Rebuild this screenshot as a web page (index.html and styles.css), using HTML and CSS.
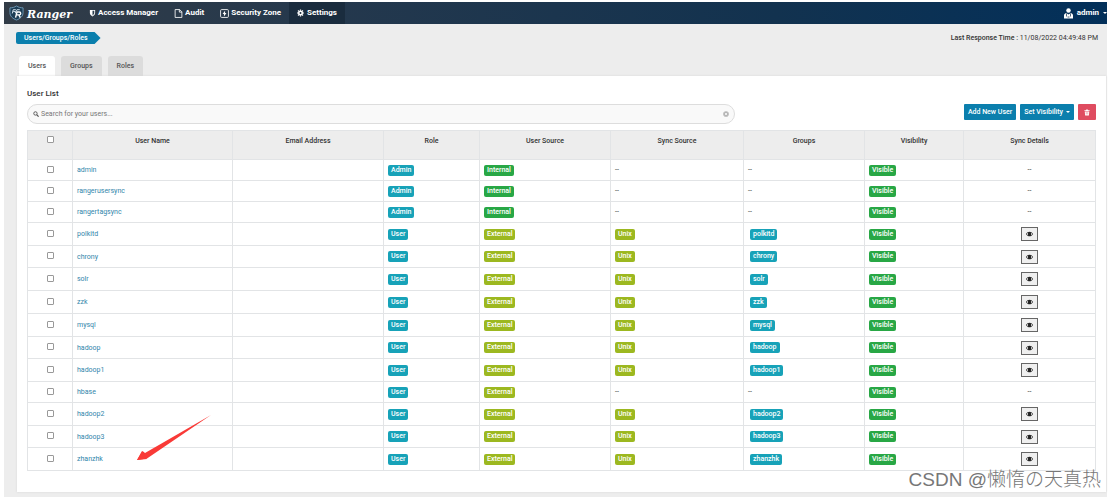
FILE: index.html
```html
<!DOCTYPE html>
<html lang="en">
<head>
<meta charset="utf-8">
<title>Ranger - Users</title>
<link rel="stylesheet" href="styles.css">
</head>
<body>
<div class="app">
  <header class="topbar">
    <a class="brand" href="#">
      <svg class="brand-mark" viewBox="0 0 32 32" aria-hidden="true">
        <path d="M16 1C12 4 7 5 2 5v10c0 8 6 13 14 16 8-3 14-8 14-16V5C25 5 20 4 16 1z" fill="#1c3d55" stroke="#6f9ab8" stroke-width="2"/>
        <path d="M7 17l2-8h5c3 0 3 4 0 4H9m4 0 2 4" fill="none" stroke="#dce9f2" stroke-width="2"/>
        <path d="M14 26l3-12h5c4 0 4 6 0 6h-6m5 0 3 6" fill="none" stroke="#fff" stroke-width="3"/>
        <path d="M17 9h6" stroke="#dce9f2" stroke-width="2"/>
      </svg>
      <span>Ranger</span>
    </a>
    <nav class="menu">
      <a href="#"><svg class="icon" viewBox="0 0 16 16"><path d="M2 1h12v7c0 4-3 6-6 8-3-2-6-4-6-8z" fill="#fff"/><path d="M8 3h4v5c0 2.500-2 4-4 5.500z" fill="#2b3e4f"/></svg>Access Manager</a>
      <a href="#"><svg class="icon icon-file" viewBox="0 0 16 16"><path d="M2 1h8l4 4v10H2zM9.500 1v4.500H14" fill="none" stroke="#fff" stroke-width="1.500"/></svg>Audit</a>
      <a href="#"><svg class="icon icon-lg" viewBox="0 0 16 16"><rect x="1" y="1" width="14" height="14" rx="2" fill="none" stroke="#fff" stroke-width="1.500"/><path d="M9 3 4.500 9H7v4.500L11.500 7H9z" fill="#fff"/></svg>Security Zone</a>
      <a class="current" href="#"><svg class="icon" viewBox="0 0 16 16"><circle cx="8" cy="8" r="4" fill="none" stroke="#fff" stroke-width="3.500"/><path d="M8 0v3M8 13v3M0 8h3M13 8h3M2.300 2.300l2 2M11.700 11.700l2 2M2.300 13.700l2-2M11.700 4.300l2-2" stroke="#fff" stroke-width="2.800"/></svg>Settings</a>
    </nav>
    <button class="account" type="button">
      <svg class="icon account-icon" viewBox="0 0 18 22"><circle cx="9" cy="5" r="4.500" fill="#fff"/><path d="M0 21v-6c0-3 2-4 4-5l5 3 5-3c2 1 4 2 4 5v6z" fill="#fff"/><path d="M5 11v6M13 11v6M7 18h4" stroke="#17334f" stroke-width="1.500"/></svg>
      admin<span class="caret"></span>
    </button>
  </header>

  <div class="crumbbar">
    <a class="crumb" href="#">Users/Groups/Roles</a>
    <p class="response"><b>Last Response Time :</b> 11/08/2022 04:49:48 PM</p>
  </div>

  <nav class="tabs">
    <a class="tab active" href="#">Users</a>
    <a class="tab" href="#">Groups</a>
    <a class="tab" href="#">Roles</a>
  </nav>

  <main class="panel">
    <h1>User List</h1>
    <div class="toolbar">
      <label class="search">
        <svg class="search-icon" viewBox="0 0 16 16"><circle cx="6.500" cy="6.500" r="4.500" fill="none" stroke="#555" stroke-width="2.500"/><path d="M10 10l5 5" stroke="#555" stroke-width="3"/></svg>
        <input type="text" placeholder="Search for your users..." aria-label="Search for your users">
        <svg class="help-icon" viewBox="0 0 16 16"><circle cx="8" cy="8" r="7.500" fill="#b5b5b5"/><path d="M5 5l6 6M11 5l-6 6" stroke="#fff" stroke-width="2"/></svg>
      </label>
      <div class="actions">
        <button class="btn" type="button">Add New User</button>
        <button class="btn" type="button">Set Visibility<span class="caret"></span></button>
        <button class="btn danger" type="button" aria-label="Delete"><svg viewBox="0 0 16 16"><path d="M1 2h4l1-2h4l1 2h4v2H1zM2 5h12l-1 11H3z" fill="#fff"/><path d="M6 7v6M10 7v6" stroke="#df4c60" stroke-width="1.200"/></svg></button>
      </div>
    </div>

    <table class="users">
      <colgroup>
        <col class="c-check"><col class="c-name"><col class="c-email"><col class="c-role"><col class="c-source"><col class="c-sync"><col class="c-groups"><col class="c-vis"><col class="c-details">
      </colgroup>
      <thead>
        <tr><th><input type="checkbox" aria-label="Select all"></th><th>User Name</th><th>Email Address</th><th>Role</th><th>User Source</th><th>Sync Source</th><th>Groups</th><th>Visibility</th><th>Sync Details</th></tr>
      </thead>
      <tbody id="rows"></tbody>
    </table>
    <svg class="pointer" viewBox="0 0 74 46" aria-hidden="true"><path d="M74 0 10 43.500 0 45 5.500 36 8 38z" fill="#f93a37"/><path d="M0 45 5 36l5 8z" fill="#f93a37"/></svg>
  </main>
  <div class="watermark">CSDN @懒惰の天真热</div>
</div>
<script src="app.js"></script>
</body>
</html>
```

FILE: styles.css
```css
* { box-sizing: border-box; }

body {
  margin: 0;
  background: #fff;
  color: #333;
  font-family: Roboto, "Noto Sans CJK SC", sans-serif;
  font-size: 7px;
  line-height: 10px;
}

a { color: inherit; text-decoration: none; }
button, input { font: inherit; margin: 0; }

.app {
  position: relative;
  margin: 2px 9px 2px 4px;
  padding-bottom: 5px;
  background: #ededed;
}

.topbar {
  display: flex;
  height: 22px;
  background: linear-gradient(90deg, #323c47, #24384d 30%, #12324f 70%, #03305a);
  color: #fff;
  font-size: 8px;
  font-weight: 700;
}

.brand {
  display: flex;
  align-items: center;
  gap: 3px;
  width: 77px;
  padding: 3px 0 0 5px;
  font-family: "DejaVu Serif", serif;
  font-size: 11px;
  font-style: italic;
}

.brand-mark { width: 15px; height: 16px; margin-bottom: 3px; }

.menu { display: flex; flex: 1; }

.menu a {
  display: flex;
  align-items: center;
  gap: 2px;
  padding: 0 8px;
}

.menu a.current { gap: 3px; background: #1a2c3e; }

.icon { width: 7px; height: 8px; flex: none; }
.icon-file, .icon-lg { width: 9px; height: 9px; }
.account-icon { width: 9px; height: 11px; }

.account {
  display: flex;
  align-items: center;
  gap: 4px;
  padding: 0;
  border: 0;
  background: none;
  color: inherit;
}

.caret {
  display: inline-block;
  border: 2px solid transparent;
  border-top-color: currentColor;
  border-bottom: 0;
}

.crumbbar {
  display: flex;
  justify-content: space-between;
  align-items: flex-start;
  height: 32px;
  padding: 8px 9px 0 12px;
}

.crumb {
  padding: 0 13px 0 8px;
  border-radius: 2px 0 0 2px;
  background: #0b7fad;
  clip-path: polygon(0 0, calc(100% - 6px) 0, 100% 50%, calc(100% - 6px) 100%, 0 100%);
  color: #fff;
  font-weight: 500;
  line-height: 12px;
}

.response { margin: 1px 0 0; }
.response b { font-weight: 500; }

.tabs {
  display: flex;
  gap: 6px;
  padding-left: 15px;
}

.tab {
  padding: 0 9px;
  border-radius: 3px 3px 0 0;
  background: #dcdcdc;
  color: #555;
  font-weight: 500;
  line-height: 20px;
}

.tab.active { background: #fff; }

.panel {
  position: relative;
  margin: 0 1px 0 13px;
  padding: 13px 10px 21px;
  background: #fff;
  box-shadow: 0 0 2px #d5d5d5;
}

h1 {
  margin: 0 0 5px;
  font-size: 8px;
  font-weight: 500;
  line-height: 10px;
}

.toolbar {
  display: flex;
  justify-content: space-between;
  align-items: flex-start;
  margin-bottom: 6px;
}

.search {
  display: flex;
  align-items: center;
  gap: 2px;
  width: 66.2%;
  height: 20px;
  padding: 0 5px;
  border: 1px solid #ddd;
  border-radius: 10px;
  background: #f9f9f9;
}

.search input {
  flex: 1;
  min-width: 0;
  padding: 0;
  border: 0;
  outline: 0;
  background: none;
  font-size: 7px;
}

.search input::placeholder { color: #777; }
.search-icon, .help-icon { width: 6px; height: 6px; }

.actions { display: flex; gap: 4px; }

.btn {
  display: flex;
  align-items: center;
  gap: 3px;
  height: 16px;
  padding: 0 4px;
  border: 0;
  border-radius: 1px;
  background: #0b7fad;
  color: #fff;
  font-weight: 500;
}

.btn.danger { padding: 0 6px; background: #df4c60; }
.btn.danger svg { width: 6px; height: 7px; }

.users {
  width: 100%;
  border-collapse: collapse;
  table-layout: fixed;
}

.c-check { width: 45px; }
.c-name { width: 160px; }
.c-email { width: 151px; }
.c-role { width: 96px; }
.c-source { width: 131px; }
.c-sync { width: 133px; }
.c-groups { width: 121px; }
.c-vis { width: 99px; }
.c-details { width: 132px; }

.users th, .users td {
  padding: 0 4px;
  border: 1px solid #e2e4e6;
  line-height: 10px;
  vertical-align: middle;
}

.users th {
  height: 29px;
  padding: 5px 4px 0;
  background: #ededed;
  font-weight: 500;
  text-align: center;
  vertical-align: top;
}

.users td { height: 21px; }
.users .detailed td { height: 23px; }
.users .detailed:nth-child(4n + 1) td { height: 22px; }
.users td:first-child, .users td:last-child { text-align: center; }
.users td a { color: #3286ab; }

.users input {
  display: block;
  width: 7px;
  height: 7px;
  margin: 0 auto;
  border: 1px solid #999;
  border-radius: 1px;
  appearance: none;
  background: #fff;
}

.users td input { margin-bottom: 2px; }
.users input:checked { background: #0b7fad; }

.badge {
  display: block;
  width: fit-content;
  padding: 0 3px;
  border-radius: 2px;
  color: #fff;
  font-weight: 500;
  line-height: 11px;
}

.group { margin-left: 2px; }

.teal { background: #17a2b8; }
.green { background: #28a745; }
.olive { background: #9cb820; }

.eye {
  display: block;
  width: 17px;
  height: 14px;
  margin: 0 auto;
  padding: 0;
  border: 1px solid #666;
  background: #efefef;
}

.eye svg { display: block; width: 7px; height: 6px; margin: auto; }

.pointer {
  position: absolute;
  left: 120px;
  bottom: 31px;
  width: 74px;
  height: 46px;
  pointer-events: none;
}

.watermark {
  position: absolute;
  right: 6px;
  bottom: 4px;
  color: #777;
  font-family: "Liberation Sans", "Noto Sans CJK SC", sans-serif;
  font-size: 19px;
  font-weight: 300;
  line-height: 26px;
}
```

FILE: app.js
```js
const users = [
  ["admin", "Admin", "Internal", false],
  ["rangerusersync", "Admin", "Internal", false],
  ["rangertagsync", "Admin", "Internal", false],
  ["polkitd", "User", "External", true],
  ["chrony", "User", "External", true],
  ["solr", "User", "External", true],
  ["zzk", "User", "External", true],
  ["mysql", "User", "External", true],
  ["hadoop", "User", "External", true],
  ["hadoop1", "User", "External", true],
  ["hbase", "User", "External", false],
  ["hadoop2", "User", "External", true],
  ["hadoop3", "User", "External", true],
  ["zhanzhk", "User", "External", true]
];

const badge = (text, color) => `<span class="badge ${color}">${text}</span>`;
const eye = name => `<button class="eye" type="button" aria-label="Sync details for ${name}"><svg viewBox="0 0 16 12"><path d="M0 6c4-7 12-7 16 0-4 7-12 7-16 0z" fill="#222"/><path d="M2 6c1-2 2-3 3-3-1 2-1 4 0 6-1 0-2-1-3-3zM14 6c-1-2-2-3-3-3 1 2 1 4 0 6 1 0 2-1 3-3z" fill="#efefef"/></svg></button>`;

document.getElementById("rows").innerHTML = users.map(([name, role, source, synced]) => `
  <tr class="${synced ? "detailed" : ""}">
    <td><input type="checkbox" aria-label="Select ${name}"></td>
    <td><a href="#">${name}</a></td>
    <td></td>
    <td>${badge(role, "teal")}</td>
    <td>${badge(source, source === "Internal" ? "green" : "olive")}</td>
    <td>${synced ? badge("Unix", "olive") : "--"}</td>
    <td>${synced ? badge(name, "teal group") : "--"}</td>
    <td>${badge("Visible", "green")}</td>
    <td>${synced ? eye(name) : "--"}</td>
  </tr>`).join("");
```
